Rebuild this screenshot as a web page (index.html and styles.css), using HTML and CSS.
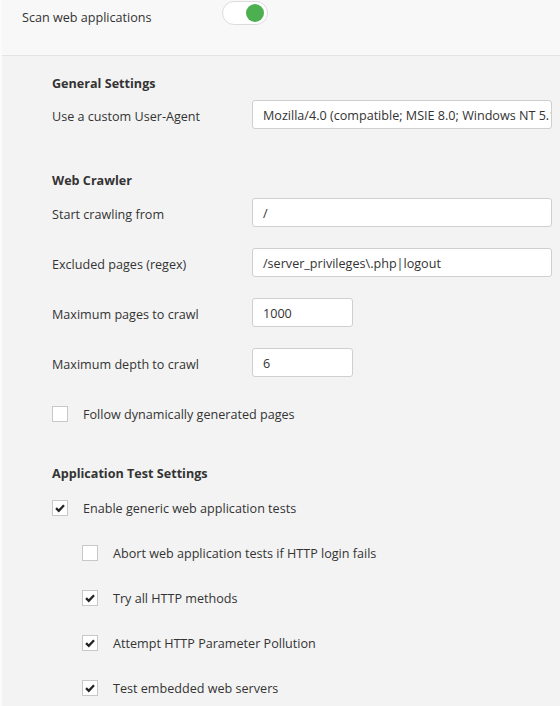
FILE: index.html
```html
<!DOCTYPE html>
<html>
<head>
<meta charset="utf-8">
<link rel="stylesheet" href="styles.css">
</head>
<body>
<div class="page">
  <div class="top">
    <span class="top-label">Scan web applications</span>
    <span class="toggle"><span class="knob"></span></span>
  </div>
  <div class="main">
    <h3 class="heading h-general">General Settings</h3>
    <div class="row">
      <label class="lbl">Use a custom User-Agent</label>
      <div class="input wide">Mozilla/4.0 (compatible; MSIE 8.0; Windows NT 5.1; Trident/4.0)</div>
    </div>

    <h3 class="heading h-crawler">Web Crawler</h3>
    <div class="row">
      <label class="lbl">Start crawling from</label>
      <div class="input wide">/</div>
    </div>
    <div class="row">
      <label class="lbl">Excluded pages (regex)</label>
      <div class="input wide">/server_privileges\.php|logout</div>
    </div>
    <div class="row">
      <label class="lbl">Maximum pages to crawl</label>
      <div class="input narrow">1000</div>
    </div>
    <div class="row">
      <label class="lbl">Maximum depth to crawl</label>
      <div class="input narrow">6</div>
    </div>
    <div class="check-row c-follow">
      <span class="box"></span>
      <span class="check-text">Follow dynamically generated pages</span>
    </div>

    <h3 class="heading h-app">Application Test Settings</h3>
    <div class="check-row c-enable">
      <span class="box"><svg viewBox="0 0 16 16" class="tick"><path d="M3.5 8.2 L6.6 11.2 L12.6 4.8"/></svg></span>
      <span class="check-text">Enable generic web application tests</span>
    </div>
    <div class="nested">
      <div class="check-row sub">
        <span class="box"></span>
        <span class="check-text">Abort web application tests if HTTP login fails</span>
      </div>
      <div class="check-row sub">
        <span class="box"><svg viewBox="0 0 16 16" class="tick"><path d="M3.5 8.2 L6.6 11.2 L12.6 4.8"/></svg></span>
        <span class="check-text">Try all HTTP methods</span>
      </div>
      <div class="check-row sub">
        <span class="box"><svg viewBox="0 0 16 16" class="tick"><path d="M3.5 8.2 L6.6 11.2 L12.6 4.8"/></svg></span>
        <span class="check-text">Attempt HTTP Parameter Pollution</span>
      </div>
      <div class="check-row sub">
        <span class="box"><svg viewBox="0 0 16 16" class="tick"><path d="M3.5 8.2 L6.6 11.2 L12.6 4.8"/></svg></span>
        <span class="check-text">Test embedded web servers</span>
      </div>
    </div>
  </div>
</div>
</body>
</html>
```
FILE: styles.css
```css
html, body {
  margin: 0;
  padding: 0;
  background: #f3f3f3;
}
body {
  font-family: "Open Sans", "Noto Sans", sans-serif;
  font-size: 12.6px;
  color: #333;
  width: 560px;
  height: 706px;
  overflow: hidden;
}
.page {
  border-left: 2px solid #fbfbfb;
  min-height: 706px;
}
.top {
  background: #f8f8f8;
  border-bottom: 1px solid #e3e3e3;
  display: flex;
  align-items: flex-start;
  padding-left: 20px;
  box-sizing: border-box;
  height: 56px;
}
.top-label {
  line-height: 20px;
  margin-top: 8px;
  width: 200px;
}
.toggle {
  margin-top: 1px;
  width: 46px;
  height: 24px;
  box-sizing: border-box;
  border: 1px solid #dcdcdc;
  border-radius: 12px;
  background: #fff;
  display: flex;
  align-items: center;
  justify-content: flex-end;
  padding-right: 3px;
}
.knob {
  width: 18px;
  height: 18px;
  border-radius: 50%;
  background: #4caf50;
}
.main {
  padding-left: 50px;
  padding-top: 18px;
}
.heading {
  margin: 0;
  font-size: 12.6px;
  font-weight: 700;
  line-height: 20px;
  color: #333;
}
.h-general { margin-bottom: 6px; }
.h-crawler { margin-top: 42px; margin-bottom: 7px; }
.h-app { margin-top: 40px; margin-bottom: 14px; }
.row {
  display: flex;
  align-items: center;
  height: 29px;
  margin-bottom: 21px;
}
.row:last-of-type { margin-bottom: 0; }
.lbl {
  width: 200px;
  flex: none;
  padding-top: 4px;
}
.input {
  height: 29px;
  box-sizing: border-box;
  border: 1px solid #cfcfcf;
  border-radius: 3px;
  background: #fff;
  padding: 2px 10px 0;
  line-height: 26px;
  white-space: nowrap;
  overflow: hidden;
  color: #333;
}
.wide { width: 300px; }
.narrow { width: 101px; }
.check-row {
  display: flex;
  align-items: center;
  height: 20px;
}
.check-text { padding-top: 1px; }
.c-follow { margin-top: 27px; }
.box {
  width: 16px;
  height: 16px;
  box-sizing: border-box;
  border: 1px solid #c8c8c8;
  background: #fff;
  flex: none;
  margin-right: 15px;
  display: flex;
}
.tick {
  width: 14px;
  height: 14px;
  fill: none;
  stroke: #222;
  stroke-width: 2.6;
  stroke-linecap: butt;
  stroke-linejoin: miter;
}
.nested {
  padding-left: 30px;
}
.sub { margin-top: 25px; }
```
